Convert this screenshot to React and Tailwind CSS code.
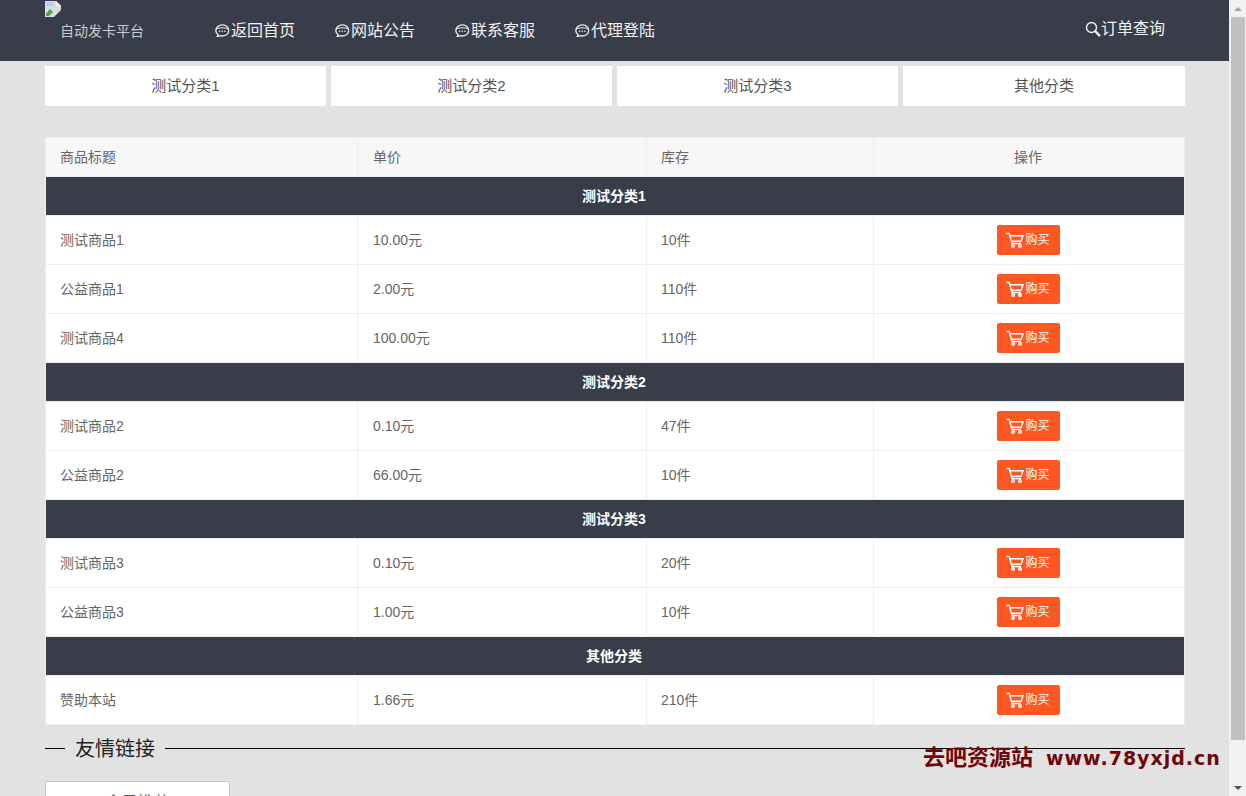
import React from 'react';

const font = { fontFamily: '"Liberation Sans", "Noto Sans CJK SC", sans-serif' };

const navItems = ['返回首页', '网站公告', '联系客服', '代理登陆'];
const tabs = ['测试分类1', '测试分类2', '测试分类3', '其他分类'];

const groups = [
  {
    name: '测试分类1',
    rows: [
      ['测试商品1', '10.00元', '10件'],
      ['公益商品1', '2.00元', '110件'],
      ['测试商品4', '100.00元', '110件'],
    ],
  },
  {
    name: '测试分类2',
    rows: [
      ['测试商品2', '0.10元', '47件'],
      ['公益商品2', '66.00元', '10件'],
    ],
  },
  {
    name: '测试分类3',
    rows: [
      ['测试商品3', '0.10元', '20件'],
      ['公益商品3', '1.00元', '10件'],
    ],
  },
  {
    name: '其他分类',
    rows: [['赞助本站', '1.66元', '210件']],
  },
];

const ChatIcon = () => (
  <svg width="16" height="16" viewBox="0 0 16 16" fill="none" stroke="currentColor" strokeWidth="1.3" className="mr-px">
    <path d="M8.500 1.800c3.400 0 6.200 2.500 6.200 5.600s-2.800 5.600-6.200 5.600c-.8 0-1.600-.1-2.300-.4-1.200.6-2.200.7-3 .6.500-.5.800-1.200.8-1.900C2.700 10.500 1.800 9 1.800 7.400 1.800 4.300 5 1.800 8.500 1.800z" />
    <path d="M2.400 6.300c2.200-2 9.800-2 12 0" strokeWidth="1" />
    <circle cx="5.700" cy="8.300" r=".8" fill="currentColor" stroke="none" />
    <circle cx="8.300" cy="8.300" r=".8" fill="currentColor" stroke="none" />
    <circle cx="10.900" cy="8.300" r=".8" fill="currentColor" stroke="none" />
  </svg>
);

const SearchIcon = () => (
  <svg width="16" height="16" viewBox="0 0 16 16" fill="none" stroke="currentColor">
    <circle cx="6.500" cy="6.500" r="5" strokeWidth="1.400" />
    <path d="M10.500 10.500l3.800 3.800" strokeWidth="2.400" strokeLinecap="round" />
  </svg>
);

const CartIcon = () => (
  <svg width="18" height="16" viewBox="0 0 18 16" fill="none" stroke="currentColor" strokeWidth="1.400" className="mr-px">
    <path d="M.500 1.500h2.800L6 11.500h9" />
    <path d="M4 3.800h13l-1.800 5.500H5.500" />
    <circle cx="7" cy="14" r="1.300" />
    <circle cx="14" cy="14" r="1.300" />
  </svg>
);

const BrokenImage = () => (
  <svg width="16" height="16" viewBox="0 0 16 16" className="block">
    <path d="M0 0h11l5 5v6l-5 5H0z" fill="#d8dde6" />
    <path d="M11 0l5 5h-5z" fill="#f5f5f5" />
    <path d="M1 13l4-5 3 3-4 4H1z" fill="#4ea63d" />
    <path d="M1 1h7v4H1z" fill="#b9cdf0" />
    <path d="M9 16l7-7v7z" fill="#393d49" />
  </svg>
);

const App = () => {
  return (
    <div className="flex h-[796px] overflow-hidden bg-[#e2e2e2]" style={font}>
      <div className="relative w-[1229px] shrink-0">
        {/* 顶部导航 */}
        <header className="flex h-[61px] bg-[#393d49] pl-[45px] text-white">
          <div className="w-[169px] shrink-0 pt-px">
            <BrokenImage />
            <div className="mt-[5px] pl-[15px] text-sm leading-[18px] text-[#c9cbd0]">自动发卡平台</div>
          </div>
          <nav className="flex pt-[21px]">
            {navItems.map((item) => (
              <a key={item} className="flex h-5 w-[120px] items-center text-base leading-5 text-[#f2f2f2]">
                <ChatIcon />
                {item}
              </a>
            ))}
          </nav>
          <a className="ml-auto mr-[64px] mt-[19px] flex h-5 items-center text-base leading-5 text-[#f2f2f2]">
            <SearchIcon />
            订单查询
          </a>
        </header>

        <main className="mx-[45px] w-[1140px]">
          {/* 分类 */}
          <div className="mt-[5px] grid grid-cols-[281px_281px_281px_282px] gap-[5px]">
            {tabs.map((tab) => (
              <div key={tab} className="flex h-10 items-center justify-center bg-white text-[15px] text-[#555]">
                {tab}
              </div>
            ))}
          </div>

          {/* 商品表格 */}
          <table className="mt-[31px] w-[1139px] table-fixed border-collapse bg-white text-sm text-[#666]">
            <colgroup>
              <col className="w-[312px]" />
              <col className="w-[289px]" />
              <col className="w-[227px]" />
              <col className="w-[311px]" />
            </colgroup>
            <thead>
              <tr className="h-[39px] bg-[#f7f7f7]">
                <th className="border border-[#eee] px-[14px] text-left font-normal">商品标题</th>
                <th className="border border-[#eee] px-[15px] text-left font-normal">单价</th>
                <th className="border border-[#eee] px-[14px] text-left font-normal">库存</th>
                <th className="border border-[#eee] pr-[2px] text-center font-normal">操作</th>
              </tr>
            </thead>
            <tbody>
              {groups.map((group) => (
                <React.Fragment key={group.name}>
                  <tr className="h-[39px] bg-[#393d49]">
                    <td colSpan={4} className="border border-[#eee] pr-[2px] text-center text-sm font-bold text-white">
                      {group.name}
                    </td>
                  </tr>
                  {group.rows.map((row) => (
                    <tr key={row[0]} className="h-[49px]">
                      <td className="border border-[#eee] px-[14px]">{row[0]}</td>
                      <td className="border border-[#eee] px-[15px]">{row[1]}</td>
                      <td className="border border-[#eee] px-[14px]">{row[2]}</td>
                      <td className="border border-[#eee] pr-[2px] text-center">
                        <button className="inline-flex h-[30px] w-[63px] items-center justify-center rounded-[2px] bg-[#ff5722] align-middle text-xs text-white">
                          <CartIcon />
                          购买
                        </button>
                      </td>
                    </tr>
                  ))}
                </React.Fragment>
              ))}
            </tbody>
          </table>

          {/* 友情链接 */}
          <div className="mt-[12px] flex h-[23px] items-center">
            <div className="h-px w-5 bg-black" />
            <div className="px-[10px] pt-[2px] text-xl leading-[23px] text-[#222]">友情链接</div>
            <div className="h-px flex-1 bg-black" />
          </div>
          <div className="mt-[21px] flex h-10 w-[185px] justify-center rounded-[2px] border border-[#c9c9c9] bg-white pt-[9px] text-base text-[#555]">
            今日推荐
          </div>
        </main>

        {/* 水印 */}
        <div className="absolute left-[923px] top-[746px] flex items-center whitespace-nowrap leading-6 font-bold text-[#6f0508]">
          <span className="text-[22px]">去吧资源站</span>
          <span className="ml-[13px] text-[19px] tracking-[1px]" style={{ fontFamily: '"DejaVu Sans", sans-serif' }}>www.78yxjd.cn</span>
        </div>
      </div>

      {/* 滚动条 */}
      <div className="flex w-[17px] shrink-0 flex-col bg-[#f1f1f1] pl-[2px] pr-px">
        <div className="flex h-[17px] items-center justify-center">
          <div className="h-0 w-0 border-x-4 border-b-4 border-x-transparent border-b-[#a3a3a3]" />
        </div>
        <div className="h-[723px] bg-[#c1c1c1]" />
        <div className="mt-auto flex h-[17px] items-center justify-center">
          <div className="h-0 w-0 border-x-4 border-t-4 border-x-transparent border-t-[#505050]" />
        </div>
      </div>
    </div>
  );
};

export default App;
